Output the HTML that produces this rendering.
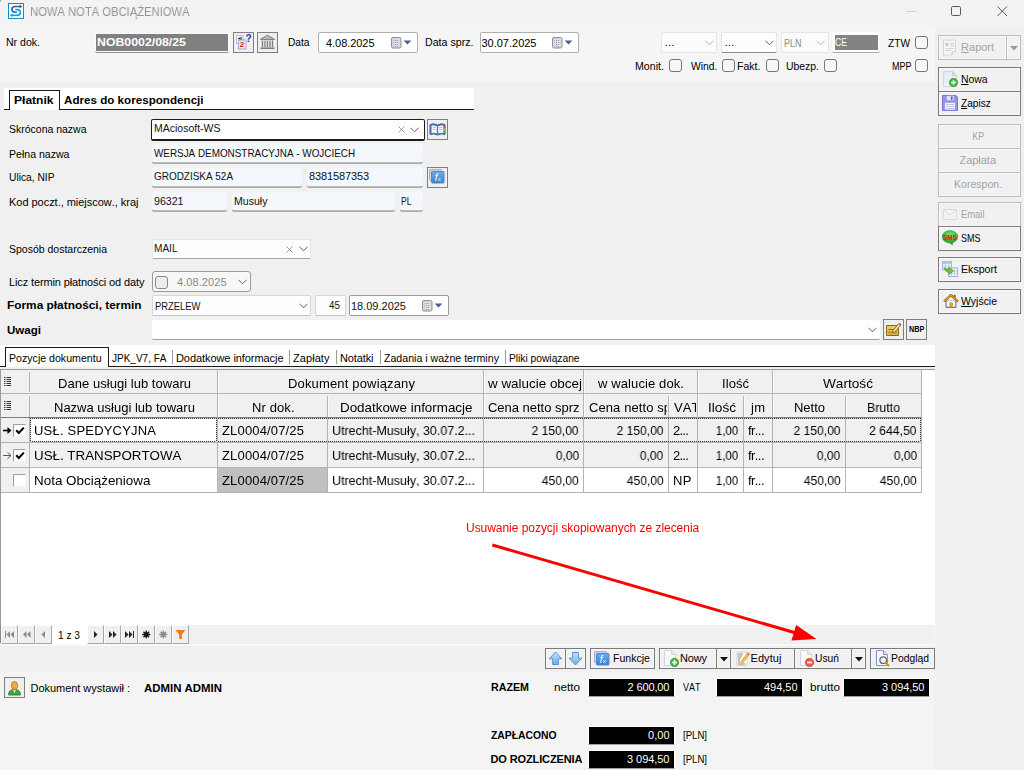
<!DOCTYPE html>
<html lang="pl">
<head>
<meta charset="utf-8">
<title>NOWA NOTA OBCIĄŻENIOWA</title>
<style>
html,body{margin:0;padding:0}
body{width:1024px;height:770px;position:relative;overflow:hidden;background:#f0f0f0;
 font-family:"Liberation Sans",sans-serif;font-size:11px;line-height:13px;color:#000;font-kerning:none}
.a{position:absolute;box-sizing:border-box}
.t{position:absolute;white-space:pre;line-height:13px}
u{text-decoration:underline;text-underline-offset:1px}
svg{position:absolute;overflow:visible}
/* buttons */
.btn{border:1px solid #7a7a7a;background:#f1f1f1;box-shadow:inset 0 0 0 1px #f8f8f8}
.btn.dis{border-color:#bdbdbd}
.ib{border:1px solid #7f7f7f;background:#efefef}
/* flat input with underline */
.fld{background:#f4f7fc;border-top:1px solid #f3f4f6;border-bottom:1px solid #bdbdbd;border-radius:2px;box-shadow:0 1px 0 #ababab}
.cmb{background:#fdfdfd;border:1px solid #e6e6e6;border-bottom:1px solid #8d8d8d;border-radius:1.5px}
.cmb.dis{border-bottom-color:#e4e4e4;background:#fbfbfb}
.date{background:#fff;border:1px solid #b0b0b0;border-radius:2px}
.chk{border:1px solid #767676;border-radius:3px;background:#f7f7f7}
.blk{background:#000;border:1px solid #fcfcfc;border-bottom-color:#a0a0a0}
/* navigator buttons */
.nb{border-right:1px solid #a8a8a8;border-bottom:1px solid #a8a8a8;border-top:1px solid #fff;border-left:1px solid #fff;background:#f0f0f0}

</style>
</head>
<body>
<div class="a" style="left:0px;top:0px;width:1024px;height:27px;background:#f3f3f3"></div>
<div class="a" style="left:0px;top:27px;width:935px;height:55px;background:#f5f5f5"></div>
<div class="a" style="left:0px;top:672px;width:935px;height:98px;background:#f4f4f4"></div>
<div class="a" style="left:0px;top:0px;width:1px;height:2px;background:#b4b4b4"></div>
<div class="a" style="left:1px;top:0px;width:1px;height:1px;background:#d4d4d4"></div>
<div class="a" style="left:1023px;top:0px;width:1px;height:1px;background:#e2e2e2"></div>
<svg style="left:8px;top:3px" width="16" height="16" viewBox="0 0 16 16">
<rect x="0.500" y="0.500" width="15" height="15" fill="#fff" stroke="#0b8fd0" stroke-width="1"/>
<path d="M12.300 3.500 H7.300 Q3.900 3.500 3.900 6.300 Q3.900 9.200 7.300 9.200 H8.800" stroke="#3d57a6" stroke-width="1.600" fill="none"/>
<path d="M11.600 1.500 L14.300 3.500 L11.600 5.500 Z" fill="#3d57a6"/>
<path d="M7.300 6.600 H9 Q12.400 6.600 12.400 9.400 Q12.400 12.300 9 12.300 H3.800" stroke="#0ea4de" stroke-width="1.600" fill="none"/>
<path d="M4.600 10.300 L1.900 12.300 L4.600 14.300 Z" fill="#0ea4de"/>
</svg>
<span class="t" style="left:29.5px;top:5px;font-size:12px;line-height:14px;color:#959595;transform:scaleX(0.935);transform-origin:left center;will-change:transform;">NOWA NOTA OBCIĄŻENIOWA</span>
<svg style="left:896px;top:0" width="128" height="27" viewBox="0 0 128 27">
<path d="M10 11.5 H20" stroke="#cfcfcf" stroke-width="1" fill="none"/>
<rect x="55.5" y="6.5" width="9" height="9" rx="1.2" fill="none" stroke="#5a5a5a" stroke-width="1"/>
<path d="M101.5 6.5 L111 16 M111 6.5 L101.5 16" stroke="#5a5a5a" stroke-width="1" fill="none"/>
</svg>
<span class="t" style="left:6px;top:36px;transform:scaleX(0.959);transform-origin:left center;">Nr dok.</span>
<div class="a" style="left:95px;top:33px;width:134px;height:20px;background:#fbfbfb;border-bottom:1px solid #8f8f8f;border-radius:2px"></div>
<div class="a" style="left:96px;top:34px;width:132px;height:17px;background:#808080"></div>
<span class="t" style="left:96.5px;top:36px;font-weight:bold;color:#fff;transform:scaleX(1.119);transform-origin:left center;">NOB0002/08/25</span>
<div class="a ib" style="left:233px;top:32px;width:21px;height:21px;"></div>
<svg style="left:235px;top:34px" width="17" height="17" viewBox="0 0 17 17">
<rect x="1.500" y="1.500" width="6.500" height="8" fill="#f4f6fb" stroke="#a8b6d0" stroke-width=".8"/>
<path d="M3 4.500 L4.800 3.300 V5.700 Z" fill="#000"/><path d="M6 3 V6" stroke="#000" stroke-width="1"/>
<rect x="3.500" y="6" width="7.500" height="9" fill="#dfe8f6" stroke="#8ea4cc" stroke-width=".8"/>
</svg>
<span class="t" style="left:239.7px;top:40px;font-size:8px;line-height:10px;font-weight:bold;color:#e01818;">2</span>
<span class="t" style="left:245.5px;top:33px;font-size:10px;line-height:12px;font-weight:bold;color:#2a2ad0;">?</span>
<div class="a ib" style="left:257px;top:32px;width:21px;height:21px;"></div>
<svg style="left:259px;top:34px" width="17" height="17" viewBox="0 0 17 17">
<path d="M8.5 1.2 L15.6 5.4 H1.4 Z" fill="#bdbdbd" stroke="#7d7d7d" stroke-width="1" stroke-linejoin="round"/>
<path d="M3.5 6.5 V13 M6 6.5 V13 M8.5 6.5 V13 M11 6.5 V13 M13.5 6.5 V13" stroke="#7d7d7d" stroke-width="1.3"/>
<path d="M1.5 14.2 H15.5" stroke="#7d7d7d" stroke-width="1.6"/>
</svg>
<span class="t" style="left:287.5px;top:36px;transform:scaleX(0.925);transform-origin:left center;">Data</span>
<div class="a date" style="left:318px;top:32px;width:100px;height:21px;"></div>
<span class="t" style="left:326px;top:37px;letter-spacing:-0.05px;">4.08.2025</span>
<svg style="left:391px;top:37px" width="22" height="12" viewBox="0 0 22 12">
<rect x="0.5" y="0.5" width="9.5" height="10.5" rx="1.5" fill="#d9d9d9" stroke="#8e8e8e"/>
<path d="M2.5 3.5 H8 M2.5 5.5 H8 M2.5 7.5 H8 M2.5 9.5 H8" stroke="#9aa3b5" stroke-width="1"/>
<path d="M3.5 2.5 V10 M5.5 2.5 V10 M7.5 2.5 V10" stroke="#f2f2f2" stroke-width=".6"/>
<path d="M12.6 3.6 H20.4 L16.5 7.6 Z" fill="#44619a"/>
</svg>
<span class="t" style="left:425px;top:36px;transform:scaleX(0.967);transform-origin:left center;">Data sprz.</span>
<div class="a date" style="left:480px;top:32px;width:99px;height:21px;"></div>
<span class="t" style="left:481.5px;top:37px;letter-spacing:-0.01px;">30.07.2025</span>
<svg style="left:552px;top:37px" width="22" height="12" viewBox="0 0 22 12">
<rect x="0.5" y="0.5" width="9.5" height="10.5" rx="1.5" fill="#d9d9d9" stroke="#8e8e8e"/>
<path d="M2.5 3.5 H8 M2.5 5.5 H8 M2.5 7.5 H8 M2.5 9.5 H8" stroke="#9aa3b5" stroke-width="1"/>
<path d="M3.5 2.5 V10 M5.5 2.5 V10 M7.5 2.5 V10" stroke="#f2f2f2" stroke-width=".6"/>
<path d="M12.6 3.6 H20.4 L16.5 7.6 Z" fill="#44619a"/>
</svg>
<div class="a cmb dis" style="left:661px;top:32px;width:56px;height:21px;"></div>
<span class="t" style="left:664.8px;top:36px;letter-spacing:0.16px;">...</span>
<svg style="left:705px;top:40px" width="9" height="6" viewBox="0 0 9 6">
<path d="M0.5 0.8 L4.5 4.8 L8.5 0.8" fill="none" stroke="#b4b4b4" stroke-width="1"/></svg>
<div class="a cmb" style="left:721px;top:32px;width:56px;height:21px;"></div>
<span class="t" style="left:724.8px;top:36px;letter-spacing:0.16px;">...</span>
<svg style="left:765px;top:40px" width="9" height="6" viewBox="0 0 9 6">
<path d="M0.5 0.8 L4.5 4.8 L8.5 0.8" fill="none" stroke="#5c5c5c" stroke-width="1"/></svg>
<div class="a cmb dis" style="left:781px;top:32px;width:48px;height:21px;"></div>
<span class="t" style="left:784px;top:37px;color:#8c8c8c;transform:scaleX(0.818);transform-origin:left center;">PLN</span>
<svg style="left:816px;top:40px" width="9" height="6" viewBox="0 0 9 6">
<path d="M0.5 0.8 L4.5 4.8 L8.5 0.8" fill="none" stroke="#b4b4b4" stroke-width="1"/></svg>
<div class="a" style="left:832px;top:32px;width:48px;height:21px;background:#fdfdfd;border-bottom:1px solid #a9a9a9;border-radius:2px"></div>
<div class="a" style="left:835px;top:35px;width:43px;height:15px;background:#838383"></div>
<span class="t" style="left:835px;top:36px;color:#fff;transform:scaleX(0.785);transform-origin:left center;">CE</span>
<span class="t" style="left:887.5px;top:37px;transform:scaleX(0.923);transform-origin:left center;">ZTW</span>
<div class="a chk" style="left:915px;top:36px;width:13px;height:13px;"></div>
<span class="t" style="left:635px;top:60px;transform:scaleX(0.968);transform-origin:left center;">Monit.</span>
<div class="a chk" style="left:669px;top:59px;width:13px;height:13px;"></div>
<span class="t" style="left:690.5px;top:60px;transform:scaleX(0.942);transform-origin:left center;">Wind.</span>
<div class="a chk" style="left:722px;top:59px;width:13px;height:13px;"></div>
<span class="t" style="left:737px;top:60px;transform:scaleX(0.961);transform-origin:left center;">Fakt.</span>
<div class="a chk" style="left:766px;top:59px;width:13px;height:13px;"></div>
<span class="t" style="left:785.5px;top:60px;transform:scaleX(0.947);transform-origin:left center;">Ubezp.</span>
<div class="a chk" style="left:824px;top:59px;width:13px;height:13px;"></div>
<span class="t" style="left:891.5px;top:60px;transform:scaleX(0.818);transform-origin:left center;">MPP</span>
<div class="a chk" style="left:915px;top:59px;width:13px;height:13px;"></div>
<div class="a" style="left:4px;top:88px;width:470px;height:21px;background:#fff"></div>
<div class="a" style="left:4px;top:109px;width:470px;height:1px;background:#1a1a1a"></div>
<div class="a" style="left:9px;top:90px;width:51px;height:20px;background:#fff;border:1px solid #1a1a1a;border-bottom:none"></div>
<span class="t" style="left:14px;top:94px;font-weight:bold;transform:scaleX(1.095);transform-origin:left center;">Płatnik</span>
<span class="t" style="left:64px;top:94px;font-weight:bold;transform:scaleX(1.057);transform-origin:left center;">Adres do korespondencji</span>
<span class="t" style="left:9px;top:123px;transform:scaleX(0.953);transform-origin:left center;">Skrócona nazwa</span>
<div class="a" style="left:151px;top:119px;width:274px;height:21.5px;background:#fff;border:1px solid #1c1c1c;border-bottom-width:2px;border-radius:2px"></div>
<span class="t" style="left:153.5px;top:122px;color:#111;transform:scaleX(0.954);transform-origin:left center;">MAciosoft-WS</span>
<svg style="left:398px;top:126px" width="7" height="7" viewBox="0 0 7 7">
<path d="M0.5 0.5 L6.5 6.5 M6.5 0.5 L0.5 6.5" fill="none" stroke="#8a8a8a" stroke-width="0.9"/></svg>
<svg style="left:410px;top:127px" width="9" height="6" viewBox="0 0 9 6">
<path d="M0.5 0.8 L4.5 4.8 L8.5 0.8" fill="none" stroke="#5c5c5c" stroke-width="1"/></svg>
<div class="a ib" style="left:427px;top:119px;width:21px;height:21px;"></div>
<svg style="left:429px;top:122px" width="17" height="15" viewBox="0 0 17 15">
<path d="M1 2.5 Q4.5 1 8.5 3 Q12.500 1 16 2.500 V12.500 Q12.500 11 8.500 13 Q4.500 11 1 12.500 Z" fill="#5b80c4" stroke="#3d5a96" stroke-width="1"/>
<path d="M2.6 3.600 Q5 3 7.800 4.300 V11.300 Q5 10.200 2.600 10.900 Z" fill="#f4f7fd"/>
<path d="M14.400 3.600 Q12 3 9.200 4.300 V11.300 Q12 10.200 14.400 10.900 Z" fill="#f4f7fd"/>
<path d="M3.800 5.500 H6.600 M3.800 7.500 H6.600 M10.400 5.500 H13.200 M10.400 7.500 H13.200" stroke="#a9bde6" stroke-width="1"/>
<rect x="14.600" y="4" width="1.600" height="2" fill="#e04a3a"/><rect x="14.600" y="6.500" width="1.600" height="2" fill="#e8c23a"/><rect x="14.600" y="9" width="1.600" height="2" fill="#4ab04a"/>
</svg>
<span class="t" style="left:9px;top:148px;transform:scaleX(0.96);transform-origin:left center;">Pełna nazwa</span>
<div class="a fld" style="left:152px;top:143px;width:271px;height:20px;"></div>
<span class="t" style="left:154px;top:147px;color:#111;transform:scaleX(0.899);transform-origin:left center;">WERSJA DEMONSTRACYJNA - WOJCIECH</span>
<span class="t" style="left:9px;top:171px;transform:scaleX(0.93);transform-origin:left center;">Ulica, NIP</span>
<div class="a fld" style="left:152px;top:167px;width:150px;height:20px;"></div>
<span class="t" style="left:154px;top:170px;color:#111;transform:scaleX(0.904);transform-origin:left center;">GRODZISKA 52A</span>
<div class="a fld" style="left:307px;top:167px;width:116px;height:20px;"></div>
<span class="t" style="left:309px;top:170px;color:#111;letter-spacing:-0.13px;">8381587353</span>
<div class="a ib" style="left:427px;top:167px;width:21px;height:21px;"></div>
<svg style="left:429px;top:169px" width="16" height="15" viewBox="0 0 16 15">
<defs><linearGradient id="gf429" x1="0" y1="0" x2="0" y2="1"><stop offset="0" stop-color="#6eaae8"/><stop offset="1" stop-color="#3f80d2"/></linearGradient></defs>
<rect x="0.500" y="0.500" width="12" height="11" rx=".8" fill="#c9d2ee" stroke="#a2aedc"/>
<rect x="2.500" y="2.500" width="12.500" height="11.500" rx=".8" fill="url(#gf429)" stroke="#4d88d4"/>
</svg>
<span class="t" style="left:434.8px;top:172px;font-size:10px;line-height:12px;color:#fff;font-style:italic;font-family:"Liberation Serif",serif;will-change:transform;">f</span>
<span class="t" style="left:438.3px;top:175px;font-size:6px;line-height:8px;color:#fff;will-change:transform;">x</span>
<span class="t" style="left:9px;top:196px;letter-spacing:-0.03px;">Kod poczt., miejscow., kraj</span>
<div class="a fld" style="left:152px;top:191px;width:75px;height:20px;"></div>
<span class="t" style="left:154px;top:195px;color:#111;transform:scaleX(0.964);transform-origin:left center;">96321</span>
<div class="a fld" style="left:232px;top:191px;width:163px;height:20px;"></div>
<span class="t" style="left:233.5px;top:195px;color:#111;transform:scaleX(0.961);transform-origin:left center;">Musuły</span>
<div class="a fld" style="left:400px;top:191px;width:23px;height:20px;"></div>
<span class="t" style="left:401px;top:195px;color:#111;transform:scaleX(0.78);transform-origin:left center;">PL</span>
<span class="t" style="left:8.5px;top:243px;transform:scaleX(0.954);transform-origin:left center;">Sposób dostarczenia</span>
<div class="a cmb" style="left:152px;top:239px;width:159px;height:20px;border-bottom-color:#a6a6a6"></div>
<span class="t" style="left:153.5px;top:242px;color:#111;transform:scaleX(0.915);transform-origin:left center;">MAIL</span>
<svg style="left:286px;top:246px" width="7" height="7" viewBox="0 0 7 7">
<path d="M0.5 0.5 L6.5 6.5 M6.5 0.5 L0.5 6.5" fill="none" stroke="#8a8a8a" stroke-width="0.9"/></svg>
<svg style="left:299px;top:246px" width="9" height="6" viewBox="0 0 9 6">
<path d="M0.5 0.8 L4.5 4.8 L8.5 0.8" fill="none" stroke="#5c5c5c" stroke-width="1"/></svg>
<span class="t" style="left:9px;top:276px;letter-spacing:-0.12px;">Licz termin płatności od daty</span>
<div class="a" style="left:152px;top:271px;width:99px;height:21px;background:#f7f7f7;border:1px solid #999;border-radius:3px"></div>
<div class="a" style="left:155px;top:276px;width:13px;height:13px;border:1px solid #8a8a8a;border-radius:3px;background:#ededed"></div>
<span class="t" style="left:177px;top:276px;color:#8a8a8a;letter-spacing:0.07px;">4.08.2025</span>
<svg style="left:238px;top:279px" width="9" height="6" viewBox="0 0 9 6">
<path d="M0.5 0.8 L4.5 4.8 L8.5 0.8" fill="none" stroke="#6a6a6a" stroke-width="1"/></svg>
<span class="t" style="left:6.5px;top:299px;font-weight:bold;transform:scaleX(1.079);transform-origin:left center;">Forma płatności, termin</span>
<div class="a cmb" style="left:152px;top:295px;width:159px;height:21px;border-color:#d6d6d6;border-bottom-color:#c4c4c4"></div>
<span class="t" style="left:154.5px;top:300px;color:#111;transform:scaleX(0.855);transform-origin:left center;">PRZELEW</span>
<svg style="left:299px;top:303px" width="9" height="6" viewBox="0 0 9 6">
<path d="M0.5 0.8 L4.5 4.8 L8.5 0.8" fill="none" stroke="#5c5c5c" stroke-width="1"/></svg>
<div class="a cmb" style="left:315px;top:295px;width:31px;height:21px;border-color:#d6d6d6;border-bottom-color:#c4c4c4"></div>
<span class="t" style="left:329px;top:299px;color:#111;transform:scaleX(0.898);transform-origin:left center;">45</span>
<div class="a date" style="left:349px;top:295px;width:100px;height:21px;border-color:#9a9a9a"></div>
<span class="t" style="left:351px;top:300px;color:#111;letter-spacing:-0.01px;">18.09.2025</span>
<svg style="left:421.5px;top:300px" width="22" height="12" viewBox="0 0 22 12">
<rect x="0.5" y="0.5" width="9.5" height="10.5" rx="1.5" fill="#d9d9d9" stroke="#8e8e8e"/>
<path d="M2.5 3.5 H8 M2.5 5.5 H8 M2.5 7.5 H8 M2.5 9.5 H8" stroke="#9aa3b5" stroke-width="1"/>
<path d="M3.5 2.5 V10 M5.5 2.5 V10 M7.5 2.5 V10" stroke="#f2f2f2" stroke-width=".6"/>
<path d="M12.6 3.6 H20.4 L16.5 7.6 Z" fill="#44619a"/>
</svg>
<span class="t" style="left:6.5px;top:324px;font-weight:bold;transform:scaleX(1.049);transform-origin:left center;">Uwagi</span>
<div class="a" style="left:152px;top:320px;width:728px;height:20px;background:#fff;border-bottom:1px solid #a0a0a0;border-radius:2px"></div>
<svg style="left:868px;top:327px" width="9" height="6" viewBox="0 0 9 6">
<path d="M0.5 0.8 L4.5 4.8 L8.5 0.8" fill="none" stroke="#5c5c5c" stroke-width="1"/></svg>
<div class="a ib" style="left:883px;top:319px;width:21px;height:21px;"></div>
<svg style="left:885px;top:321px" width="17" height="17" viewBox="0 0 17 17">
<path d="M1.5 4.500 H13.500 V14.500 H1.500 Z" fill="#e8c85a" stroke="#8a6a1a" stroke-width="1"/>
<path d="M2.500 10 H12.500 V13.500 H2.500 Z" fill="#c9a030"/>
<path d="M3.500 8.500 H9" stroke="#8a6a1a" stroke-width="1"/>
<path d="M8 9.500 L13.500 3 L15.500 4.500 L10 11 L7.600 11.600 Z" fill="#f4e2a0" stroke="#7a5a1a" stroke-width=".8"/>
<path d="M13.500 3 L14.600 1.700 L16.400 3.300 L15.500 4.500 Z" fill="#e0503a"/>
</svg>
<div class="a ib" style="left:906px;top:319px;width:21px;height:21px;"></div>
<span class="t" style="left:908.5px;top:324px;font-size:9px;line-height:11px;font-weight:bold;transform:scaleX(0.805);transform-origin:left center;">NBP</span>
<div class="a" style="left:0px;top:345px;width:935px;height:22px;background:#fff"></div>
<div class="a" style="left:0px;top:366px;width:935px;height:1px;background:#1a1a1a"></div>
<div class="a" style="left:5px;top:347px;width:104px;height:20px;background:#fff;border:1px solid #1a1a1a;border-bottom:none"></div>
<span class="t" style="left:9px;top:352px;transform:scaleX(0.964);transform-origin:left center;">Pozycje dokumentu</span>
<span class="t" style="left:112px;top:352px;transform:scaleX(0.91);transform-origin:left center;">JPK_V7, FA</span>
<span class="t" style="left:176px;top:352px;letter-spacing:-0.07px;">Dodatkowe informacje</span>
<span class="t" style="left:293px;top:352px;letter-spacing:0.07px;">Zapłaty</span>
<span class="t" style="left:340px;top:352px;letter-spacing:-0.12px;">Notatki</span>
<span class="t" style="left:384px;top:352px;transform:scaleX(0.964);transform-origin:left center;">Zadania i ważne terminy</span>
<span class="t" style="left:509px;top:352px;transform:scaleX(0.93);transform-origin:left center;">Pliki powiązane</span>
<div class="a" style="left:172px;top:350px;width:1px;height:14px;background:#9a9a9a"></div>
<div class="a" style="left:289px;top:350px;width:1px;height:14px;background:#9a9a9a"></div>
<div class="a" style="left:336px;top:350px;width:1px;height:14px;background:#9a9a9a"></div>
<div class="a" style="left:380px;top:350px;width:1px;height:14px;background:#9a9a9a"></div>
<div class="a" style="left:505px;top:350px;width:1px;height:14px;background:#9a9a9a"></div>
<div class="a" style="left:0px;top:369px;width:935px;height:257px;background:#fff;border-top:1px solid #9a9a9a;border-left:1px solid #9a9a9a"></div>
<div class="a" style="left:1px;top:370px;width:921px;height:48px;background:#f0f0f0"></div>
<div class="a" style="left:1px;top:393px;width:921px;height:1px;background:#b4b4b4"></div>
<div class="a" style="left:1px;top:417px;width:921px;height:1px;background:#7a7a7a"></div>
<div class="a" style="left:29px;top:372px;width:1px;height:20px;background:#b4b4b4"></div>
<div class="a" style="left:217px;top:370px;width:1px;height:24px;background:#b4b4b4"></div>
<div class="a" style="left:483px;top:370px;width:1px;height:24px;background:#b4b4b4"></div>
<div class="a" style="left:583px;top:370px;width:1px;height:24px;background:#b4b4b4"></div>
<div class="a" style="left:697px;top:370px;width:1px;height:24px;background:#b4b4b4"></div>
<div class="a" style="left:772px;top:370px;width:1px;height:24px;background:#b4b4b4"></div>
<div class="a" style="left:921px;top:370px;width:1px;height:24px;background:#b4b4b4"></div>
<div class="a" style="left:29px;top:396px;width:1px;height:21px;background:#b4b4b4"></div>
<div class="a" style="left:217px;top:394px;width:1px;height:24px;background:#b4b4b4"></div>
<div class="a" style="left:327px;top:396px;width:1px;height:21px;background:#b4b4b4"></div>
<div class="a" style="left:483px;top:394px;width:1px;height:24px;background:#b4b4b4"></div>
<div class="a" style="left:583px;top:394px;width:1px;height:24px;background:#b4b4b4"></div>
<div class="a" style="left:668px;top:396px;width:1px;height:21px;background:#b4b4b4"></div>
<div class="a" style="left:697px;top:394px;width:1px;height:24px;background:#b4b4b4"></div>
<div class="a" style="left:743px;top:396px;width:1px;height:21px;background:#b4b4b4"></div>
<div class="a" style="left:772px;top:394px;width:1px;height:24px;background:#b4b4b4"></div>
<div class="a" style="left:845px;top:396px;width:1px;height:21px;background:#b4b4b4"></div>
<div class="a" style="left:921px;top:394px;width:1px;height:24px;background:#b4b4b4"></div>
<div class="a" style="left:218px;top:370px;width:1px;height:23px;background:#fbfbfb"></div>
<div class="a" style="left:218px;top:394px;width:1px;height:23px;background:#fbfbfb"></div>
<div class="a" style="left:484px;top:370px;width:1px;height:23px;background:#fbfbfb"></div>
<div class="a" style="left:484px;top:394px;width:1px;height:23px;background:#fbfbfb"></div>
<div class="a" style="left:584px;top:370px;width:1px;height:23px;background:#fbfbfb"></div>
<div class="a" style="left:584px;top:394px;width:1px;height:23px;background:#fbfbfb"></div>
<div class="a" style="left:698px;top:370px;width:1px;height:23px;background:#fbfbfb"></div>
<div class="a" style="left:698px;top:394px;width:1px;height:23px;background:#fbfbfb"></div>
<div class="a" style="left:773px;top:370px;width:1px;height:23px;background:#fbfbfb"></div>
<div class="a" style="left:773px;top:394px;width:1px;height:23px;background:#fbfbfb"></div>
<div class="a" style="left:328px;top:396px;width:1px;height:21px;background:#fbfbfb"></div>
<div class="a" style="left:669px;top:396px;width:1px;height:21px;background:#fbfbfb"></div>
<div class="a" style="left:744px;top:396px;width:1px;height:21px;background:#fbfbfb"></div>
<div class="a" style="left:846px;top:396px;width:1px;height:21px;background:#fbfbfb"></div>
<span class="t" style="left:57.5px;top:376px;font-size:13px;line-height:15px;color:#000;letter-spacing:0.04px;will-change:transform;">Dane usługi lub towaru</span>
<span class="t" style="left:288px;top:376px;font-size:13px;line-height:15px;color:#000;letter-spacing:0.16px;will-change:transform;">Dokument powiązany</span>
<span class="t" style="left:487.5px;top:376px;font-size:13px;line-height:15px;color:#000;transform:scaleX(1.032);transform-origin:left center;width:92.1px;overflow:hidden;will-change:transform;">w walucie obcej</span>
<span class="t" style="left:598px;top:376px;font-size:13px;line-height:15px;color:#000;letter-spacing:0.11px;will-change:transform;">w walucie dok.</span>
<span class="t" style="left:722px;top:376px;font-size:13px;line-height:15px;color:#000;letter-spacing:0.07px;will-change:transform;">Ilość</span>
<span class="t" style="left:823px;top:376px;font-size:13px;line-height:15px;color:#000;transform:scaleX(1.049);transform-origin:left center;will-change:transform;">Wartość</span>
<span class="t" style="left:53.5px;top:400px;font-size:13px;line-height:15px;color:#000;will-change:transform;">Nazwa usługi lub towaru</span>
<span class="t" style="left:252px;top:400px;font-size:13px;line-height:15px;color:#000;letter-spacing:0.1px;will-change:transform;">Nr dok.</span>
<span class="t" style="left:340px;top:400px;font-size:13px;line-height:15px;color:#000;transform:scaleX(1.03);transform-origin:left center;will-change:transform;">Dodatkowe informacje</span>
<span class="t" style="left:488px;top:400px;font-size:13px;line-height:15px;color:#000;letter-spacing:-0.02px;width:94px;overflow:hidden;will-change:transform;">Cena netto sprz</span>
<span class="t" style="left:589px;top:400px;font-size:13px;line-height:15px;color:#000;letter-spacing:0.09px;width:77.5px;overflow:hidden;will-change:transform;">Cena netto spr</span>
<span class="t" style="left:673.5px;top:400px;font-size:13px;line-height:15px;color:#000;letter-spacing:0.1px;width:22px;overflow:hidden;will-change:transform;">VAT</span>
<span class="t" style="left:708px;top:400px;font-size:13px;line-height:15px;color:#000;transform:scaleX(1.047);transform-origin:left center;will-change:transform;">Ilość</span>
<span class="t" style="left:751px;top:400px;font-size:13px;line-height:15px;color:#000;letter-spacing:0.28px;will-change:transform;">jm</span>
<span class="t" style="left:793.5px;top:400px;font-size:13px;line-height:15px;color:#000;letter-spacing:-0.02px;will-change:transform;">Netto</span>
<span class="t" style="left:867px;top:400px;font-size:13px;line-height:15px;color:#000;transform:scaleX(0.951);transform-origin:left center;will-change:transform;">Brutto</span>
<svg style="left:4px;top:376px" width="7" height="10" viewBox="0 0 7 10">
<path d="M0 1.500 H1.500 M2.500 1.500 H7 M0 3.500 H1.500 M2.500 3.500 H7 M0 5.500 H1.500 M2.500 5.500 H7 M0 7.500 H1.500 M2.500 7.500 H7 M0 9.500 H1.500 M2.500 9.500 H7" stroke="#333" stroke-width="1"/></svg>
<svg style="left:4px;top:400px" width="7" height="10" viewBox="0 0 7 10">
<path d="M0 1.500 H1.500 M2.500 1.500 H7 M0 3.500 H1.500 M2.500 3.500 H7 M0 5.500 H1.500 M2.500 5.500 H7 M0 7.500 H1.500 M2.500 7.500 H7 M0 9.500 H1.500 M2.500 9.500 H7" stroke="#333" stroke-width="1"/></svg>
<div class="a" style="left:1px;top:418px;width:921px;height:24px;background:#f0f0f0"></div>
<div class="a" style="left:30px;top:419px;width:187px;height:23px;background:#fff"></div>
<div class="a" style="left:1px;top:442px;width:921px;height:1px;background:#b4b4b4"></div>
<div class="a" style="left:29px;top:418px;width:1px;height:25px;background:#b4b4b4"></div>
<div class="a" style="left:217px;top:418px;width:1px;height:25px;background:#b4b4b4"></div>
<div class="a" style="left:327px;top:418px;width:1px;height:25px;background:#b4b4b4"></div>
<div class="a" style="left:483px;top:418px;width:1px;height:25px;background:#b4b4b4"></div>
<div class="a" style="left:583px;top:418px;width:1px;height:25px;background:#b4b4b4"></div>
<div class="a" style="left:668px;top:418px;width:1px;height:25px;background:#b4b4b4"></div>
<div class="a" style="left:697px;top:418px;width:1px;height:25px;background:#b4b4b4"></div>
<div class="a" style="left:743px;top:418px;width:1px;height:25px;background:#b4b4b4"></div>
<div class="a" style="left:772px;top:418px;width:1px;height:25px;background:#b4b4b4"></div>
<div class="a" style="left:845px;top:418px;width:1px;height:25px;background:#b4b4b4"></div>
<div class="a" style="left:921px;top:418px;width:1px;height:25px;background:#b4b4b4"></div>
<span class="t" style="left:33.5px;top:423px;font-size:13px;line-height:15px;color:#000;letter-spacing:0.2px;will-change:transform;">USŁ. SPEDYCYJNA</span>
<span class="t" style="left:222px;top:423px;font-size:13px;line-height:15px;color:#000;letter-spacing:0.16px;will-change:transform;">ZL0004/07/25</span>
<span class="t" style="left:332px;top:423px;font-size:13px;line-height:15px;color:#000;transform:scaleX(0.961);transform-origin:left center;will-change:transform;">Utrecht-Musuły, 30.07.2...</span>
<span class="t" style="left:528.4px;top:423px;font-size:13px;line-height:15px;color:#000;transform:scaleX(0.929);transform-origin:right center;will-change:transform;">2 150,00</span>
<span class="t" style="left:612.9px;top:423px;font-size:13px;line-height:15px;color:#000;transform:scaleX(0.929);transform-origin:right center;will-change:transform;">2 150,00</span>
<span class="t" style="left:673px;top:423px;font-size:13px;line-height:15px;color:#000;letter-spacing:-0.76px;will-change:transform;">2...</span>
<span class="t" style="left:712.7px;top:423px;font-size:13px;line-height:15px;color:#000;transform:scaleX(0.889);transform-origin:right center;will-change:transform;">1,00</span>
<span class="t" style="left:747.7px;top:423px;font-size:13px;line-height:15px;color:#000;letter-spacing:-0.57px;will-change:transform;">fr...</span>
<span class="t" style="left:789.9px;top:423px;font-size:13px;line-height:15px;color:#000;transform:scaleX(0.929);transform-origin:right center;will-change:transform;">2 150,00</span>
<span class="t" style="left:866.4px;top:423px;font-size:13px;line-height:15px;color:#000;transform:scaleX(0.939);transform-origin:right center;will-change:transform;">2 644,50</span>
<div class="a" style="left:1px;top:443px;width:921px;height:24px;background:#f0f0f0"></div>
<div class="a" style="left:1px;top:467px;width:921px;height:1px;background:#b4b4b4"></div>
<div class="a" style="left:29px;top:443px;width:1px;height:25px;background:#b4b4b4"></div>
<div class="a" style="left:217px;top:443px;width:1px;height:25px;background:#b4b4b4"></div>
<div class="a" style="left:327px;top:443px;width:1px;height:25px;background:#b4b4b4"></div>
<div class="a" style="left:483px;top:443px;width:1px;height:25px;background:#b4b4b4"></div>
<div class="a" style="left:583px;top:443px;width:1px;height:25px;background:#b4b4b4"></div>
<div class="a" style="left:668px;top:443px;width:1px;height:25px;background:#b4b4b4"></div>
<div class="a" style="left:697px;top:443px;width:1px;height:25px;background:#b4b4b4"></div>
<div class="a" style="left:743px;top:443px;width:1px;height:25px;background:#b4b4b4"></div>
<div class="a" style="left:772px;top:443px;width:1px;height:25px;background:#b4b4b4"></div>
<div class="a" style="left:845px;top:443px;width:1px;height:25px;background:#b4b4b4"></div>
<div class="a" style="left:921px;top:443px;width:1px;height:25px;background:#b4b4b4"></div>
<span class="t" style="left:33.5px;top:448px;font-size:13px;line-height:15px;color:#000;transform:scaleX(1.026);transform-origin:left center;will-change:transform;">USŁ. TRANSPORTOWA</span>
<span class="t" style="left:222px;top:448px;font-size:13px;line-height:15px;color:#000;letter-spacing:0.16px;will-change:transform;">ZL0004/07/25</span>
<span class="t" style="left:332px;top:448px;font-size:13px;line-height:15px;color:#000;transform:scaleX(0.961);transform-origin:left center;will-change:transform;">Utrecht-Musuły, 30.07.2...</span>
<span class="t" style="left:553.7px;top:448px;font-size:13px;line-height:15px;color:#000;transform:scaleX(0.928);transform-origin:right center;will-change:transform;">0,00</span>
<span class="t" style="left:638.2px;top:448px;font-size:13px;line-height:15px;color:#000;transform:scaleX(0.928);transform-origin:right center;will-change:transform;">0,00</span>
<span class="t" style="left:673px;top:448px;font-size:13px;line-height:15px;color:#000;letter-spacing:-0.76px;will-change:transform;">2...</span>
<span class="t" style="left:712.7px;top:448px;font-size:13px;line-height:15px;color:#000;transform:scaleX(0.889);transform-origin:right center;will-change:transform;">1,00</span>
<span class="t" style="left:747.7px;top:448px;font-size:13px;line-height:15px;color:#000;letter-spacing:-0.57px;will-change:transform;">fr...</span>
<span class="t" style="left:815.2px;top:448px;font-size:13px;line-height:15px;color:#000;transform:scaleX(0.928);transform-origin:right center;will-change:transform;">0,00</span>
<span class="t" style="left:891.7px;top:448px;font-size:13px;line-height:15px;color:#000;transform:scaleX(0.928);transform-origin:right center;will-change:transform;">0,00</span>
<div class="a" style="left:1px;top:468px;width:29px;height:24px;background:#f0f0f0"></div>
<div class="a" style="left:218px;top:468px;width:109px;height:24px;background:#c0c0c0"></div>
<div class="a" style="left:1px;top:492px;width:921px;height:1px;background:#b4b4b4"></div>
<div class="a" style="left:29px;top:468px;width:1px;height:25px;background:#b4b4b4"></div>
<div class="a" style="left:217px;top:468px;width:1px;height:25px;background:#b4b4b4"></div>
<div class="a" style="left:327px;top:468px;width:1px;height:25px;background:#b4b4b4"></div>
<div class="a" style="left:483px;top:468px;width:1px;height:25px;background:#b4b4b4"></div>
<div class="a" style="left:583px;top:468px;width:1px;height:25px;background:#b4b4b4"></div>
<div class="a" style="left:668px;top:468px;width:1px;height:25px;background:#b4b4b4"></div>
<div class="a" style="left:697px;top:468px;width:1px;height:25px;background:#b4b4b4"></div>
<div class="a" style="left:743px;top:468px;width:1px;height:25px;background:#b4b4b4"></div>
<div class="a" style="left:772px;top:468px;width:1px;height:25px;background:#b4b4b4"></div>
<div class="a" style="left:845px;top:468px;width:1px;height:25px;background:#b4b4b4"></div>
<div class="a" style="left:921px;top:468px;width:1px;height:25px;background:#b4b4b4"></div>
<span class="t" style="left:33.5px;top:473px;font-size:13px;line-height:15px;color:#000;transform:scaleX(1.033);transform-origin:left center;will-change:transform;">Nota Obciążeniowa</span>
<span class="t" style="left:222px;top:473px;font-size:13px;line-height:15px;color:#000;letter-spacing:0.16px;will-change:transform;">ZL0004/07/25</span>
<span class="t" style="left:332px;top:473px;font-size:13px;line-height:15px;color:#000;transform:scaleX(0.961);transform-origin:left center;will-change:transform;">Utrecht-Musuły, 30.07.2...</span>
<span class="t" style="left:539.2px;top:473px;font-size:13px;line-height:15px;color:#000;transform:scaleX(0.93);transform-origin:right center;will-change:transform;">450,00</span>
<span class="t" style="left:623.7px;top:473px;font-size:13px;line-height:15px;color:#000;transform:scaleX(0.93);transform-origin:right center;will-change:transform;">450,00</span>
<span class="t" style="left:673px;top:473px;font-size:13px;line-height:15px;color:#000;letter-spacing:0.44px;will-change:transform;">NP</span>
<span class="t" style="left:712.7px;top:473px;font-size:13px;line-height:15px;color:#000;transform:scaleX(0.889);transform-origin:right center;will-change:transform;">1,00</span>
<span class="t" style="left:747.7px;top:473px;font-size:13px;line-height:15px;color:#000;letter-spacing:-0.57px;will-change:transform;">fr...</span>
<span class="t" style="left:800.7px;top:473px;font-size:13px;line-height:15px;color:#000;transform:scaleX(0.93);transform-origin:right center;will-change:transform;">450,00</span>
<span class="t" style="left:877.2px;top:473px;font-size:13px;line-height:15px;color:#000;transform:scaleX(0.93);transform-origin:right center;will-change:transform;">450,00</span>
<div class="a" style="left:30px;top:418px;width:891px;height:1px;background:repeating-linear-gradient(90deg,#3a3a3a 0 1px,#d6d6d6 1px 2px)"></div>
<div class="a" style="left:30px;top:441px;width:891px;height:1px;background:repeating-linear-gradient(90deg,#3a3a3a 0 1px,#d6d6d6 1px 2px)"></div>
<div class="a" style="left:30px;top:418px;width:1px;height:24px;background:repeating-linear-gradient(180deg,#3a3a3a 0 1px,#d6d6d6 1px 2px)"></div>
<div class="a" style="left:216px;top:418px;width:1px;height:24px;background:repeating-linear-gradient(180deg,#3a3a3a 0 1px,#d6d6d6 1px 2px)"></div>
<div class="a" style="left:920px;top:418px;width:1px;height:24px;background:repeating-linear-gradient(180deg,#3a3a3a 0 1px,#d6d6d6 1px 2px)"></div>
<svg style="left:3px;top:426px" width="9" height="9" viewBox="0 0 9 9">
<path d="M0 4.500 H6" stroke="#000" stroke-width="1.600"/><path d="M4.500 1 L8.500 4.500 L4.500 8 Z" fill="#000"/></svg>
<svg style="left:3px;top:451px" width="9" height="9" viewBox="0 0 9 9">
<path d="M0 4.500 H7.500 M4.500 1.300 L8 4.500 L4.500 7.700" stroke="#5a5a5a" stroke-width="1" fill="none"/></svg>
<div class="a" style="left:13px;top:424px;width:13px;height:13px;background:#fff;border:1px solid #f4f4f4;border-top-color:#a0a0a0;border-left-color:#a0a0a0"></div>
<svg style="left:15px;top:426px" width="10" height="9" viewBox="0 0 10 9">
<path d="M1.200 4.300 L3.800 6.900 L8.800 1.600" stroke="#000" stroke-width="2.100" fill="none"/></svg>
<div class="a" style="left:13px;top:449px;width:13px;height:13px;background:#fff;border:1px solid #f4f4f4;border-top-color:#a0a0a0;border-left-color:#a0a0a0"></div>
<svg style="left:15px;top:451px" width="10" height="9" viewBox="0 0 10 9">
<path d="M1.200 4.300 L3.800 6.900 L8.800 1.600" stroke="#000" stroke-width="2.100" fill="none"/></svg>
<div class="a" style="left:13px;top:474px;width:13px;height:13px;background:#fff;border:1px solid #f4f4f4;border-top-color:#a0a0a0;border-left-color:#a0a0a0"></div>
<div class="a" style="left:0px;top:625px;width:935px;height:21px;background:#f0f0f0;border-bottom:2px solid #f8f8f8;border-right:1px solid #f8f8f8"></div>
<div class="a" style="left:52px;top:625px;width:35px;height:19px;background:#fff"></div>
<span class="t" style="left:58px;top:629px;transform:scaleX(0.922);transform-origin:left center;">1 z 3</span>
<div class="a" style="left:0px;top:625px;width:1px;height:18px;background:#8a8a8a"></div>
<div class="a nb" style="left:1px;top:625px;width:17px;height:19px;"></div>
<div class="a nb" style="left:18px;top:625px;width:17px;height:19px;"></div>
<div class="a nb" style="left:35px;top:625px;width:17px;height:19px;"></div>
<div class="a nb" style="left:87px;top:625px;width:17px;height:19px;"></div>
<div class="a nb" style="left:104px;top:625px;width:17px;height:19px;"></div>
<div class="a nb" style="left:121px;top:625px;width:17px;height:19px;"></div>
<div class="a nb" style="left:138px;top:625px;width:17px;height:19px;"></div>
<div class="a nb" style="left:155px;top:625px;width:17px;height:19px;"></div>
<div class="a nb" style="left:172px;top:625px;width:17px;height:19px;"></div>
<svg style="left:1px;top:629px" width="17" height="11" viewBox="0 0 17 11"><path d="M4 2 H5 V9 H4 Z M9 2 V9 L5.500 5.500 Z M13 2 V9 L9.500 5.500 Z" fill="#8c8c8c"/></svg>
<svg style="left:18px;top:629px" width="17" height="11" viewBox="0 0 17 11"><path d="M8.500 2 V9 L5 5.500 Z M12.500 2 V9 L9 5.500 Z" fill="#8c8c8c"/></svg>
<svg style="left:35px;top:629px" width="17" height="11" viewBox="0 0 17 11"><path d="M10 2 V9 L6.500 5.500 Z" fill="#8c8c8c"/></svg>
<svg style="left:87px;top:629px" width="17" height="11" viewBox="0 0 17 11"><path d="M7 2 V9 L10.500 5.500 Z" fill="#222"/></svg>
<svg style="left:104px;top:629px" width="17" height="11" viewBox="0 0 17 11"><path d="M5 2 V9 L8.500 5.500 Z M9 2 V9 L12.500 5.500 Z" fill="#222"/></svg>
<svg style="left:121px;top:629px" width="17" height="11" viewBox="0 0 17 11"><path d="M4 2 V9 L7.500 5.500 Z M8 2 V9 L11.500 5.500 Z M12 2 H13 V9 H12 Z" fill="#222"/></svg>
<svg style="left:138px;top:629px" width="17" height="11" viewBox="0 0 17 11">
<circle cx="8.300" cy="5.500" r="2.300" fill="#111"/>
<path d="M8.300 1.500 V9.500 M4.300 5.500 H12.300 M5.500 2.700 L11.100 8.300 M11.100 2.700 L5.500 8.300" stroke="#111" stroke-width="1.300"/></svg>
<svg style="left:155px;top:629px" width="17" height="11" viewBox="0 0 17 11">
<circle cx="8.300" cy="5.500" r="2.300" fill="#8a8a8a"/>
<path d="M8.300 1.500 V9.500 M4.300 5.500 H12.300 M5.500 2.700 L11.100 8.300 M11.100 2.700 L5.500 8.300" stroke="#8a8a8a" stroke-width="1.300"/></svg>
<svg style="left:172px;top:629px" width="17" height="11" viewBox="0 0 17 11"><path d="M3.500 1 H13.500 L9.800 5.500 V10 H7.200 V5.500 Z" fill="#f07a10"/></svg>
<div class="a btn" style="left:545px;top:648px;width:21px;height:21px;"></div>
<div class="a btn" style="left:565px;top:648px;width:21px;height:21px;"></div>
<svg style="left:548px;top:651px" width="15" height="15" viewBox="0 0 15 15">
<defs><linearGradient id="gu" x1="0" y1="0" x2="0" y2="1"><stop offset="0" stop-color="#c4e6fa"/><stop offset="1" stop-color="#6aaee6"/></linearGradient></defs>
<path d="M7.500 1 L13.800 7.800 H10.300 V13.500 H4.700 V7.800 H1.200 Z" fill="url(#gu)" stroke="#5a8fd6" stroke-width="1" stroke-linejoin="round"/></svg>
<svg style="left:568px;top:651px" width="15" height="15" viewBox="0 0 15 15">
<path d="M7.500 14 L13.800 7.200 H10.300 V1.500 H4.700 V7.200 H1.200 Z" fill="url(#gu)" stroke="#5a8fd6" stroke-width="1" stroke-linejoin="round"/></svg>
<div class="a btn" style="left:590px;top:648px;width:65px;height:21px;"></div>
<svg style="left:594px;top:651px" width="16" height="15" viewBox="0 0 16 15">
<defs><linearGradient id="gf594" x1="0" y1="0" x2="0" y2="1"><stop offset="0" stop-color="#6eaae8"/><stop offset="1" stop-color="#3f80d2"/></linearGradient></defs>
<rect x="0.500" y="0.500" width="12" height="11" rx=".8" fill="#c9d2ee" stroke="#a2aedc"/>
<rect x="2.500" y="2.500" width="12.500" height="11.500" rx=".8" fill="url(#gf594)" stroke="#4d88d4"/>
</svg>
<span class="t" style="left:599.8px;top:654px;font-size:10px;line-height:12px;color:#fff;font-style:italic;font-family:"Liberation Serif",serif;will-change:transform;">f</span>
<span class="t" style="left:603.3px;top:657px;font-size:6px;line-height:8px;color:#fff;will-change:transform;">x</span>
<span class="t" style="left:613px;top:652px;transform:scaleX(0.96);transform-origin:left center;">Funkcje</span>
<div class="a btn" style="left:659px;top:648px;width:58px;height:21px;"></div>
<div class="a btn" style="left:716px;top:648px;width:15px;height:21px;"></div>
<svg style="left:663px;top:650px" width="14" height="17" viewBox="0 0 14 17">
<path d="M1.500 0.500 H8.500 L12.500 4.500 V15.500 H1.500 Z" fill="#f7f8fb" stroke="#d2d4dc" stroke-width="1"/>
<path d="M8.500 0.500 V4.500 H12.500" fill="#e6e6e6" stroke="#d2d4dc" stroke-width="1"/></svg>
<svg style="left:670px;top:657.5px" width="9" height="9" viewBox="0 0 9 9">
<circle cx="4.500" cy="4.500" r="4.200" fill="#3fb83f" stroke="#2a962a" stroke-width=".6"/>
<path d="M4.500 2 V7 M2 4.500 H7" stroke="#fff" stroke-width="1.500"/></svg>
<span class="t" style="left:680px;top:652px;letter-spacing:-0.17px;">Nowy</span>
<svg style="left:720px;top:657px" width="8" height="5" viewBox="0 0 8 5">
<path d="M0 0 H8 L4 4.500 Z" fill="#111"/></svg>
<div class="a btn" style="left:730px;top:648px;width:65px;height:21px;"></div>
<svg style="left:736px;top:650.5px" width="14" height="15" viewBox="0 0 14 15">
<path d="M1 1 H11 V14.500 H1 Z" fill="#fcfcfa" stroke="#d2d2d2" stroke-width="1"/>
<path d="M2 3 H7 M2 5 H6 M2 7 H5 M2 9 H4 M2 11 H4 M2 13 H9" stroke="#8c8c8c" stroke-width="1"/>
<path d="M4.800 10.800 L11 2.800 L12.800 4.200 L6.600 12.200 L4.300 13 Z" fill="#f2c23c" stroke="#c8901c" stroke-width=".6"/>
<path d="M11 2.800 L12 1.500 L13.800 2.900 L12.800 4.200 Z" fill="#e85a4a"/>
<path d="M4.800 10.800 L6.600 12.200 L4.300 13 Z" fill="#e8d4a0"/></svg>
<span class="t" style="left:750.5px;top:652px;letter-spacing:0.08px;">Edytuj</span>
<div class="a btn" style="left:794px;top:648px;width:58px;height:21px;"></div>
<div class="a btn" style="left:851px;top:648px;width:15px;height:21px;"></div>
<svg style="left:799px;top:650px" width="14" height="17" viewBox="0 0 14 17">
<path d="M1.500 0.500 H8.500 L12.500 4.500 V15.500 H1.500 Z" fill="#f7f8fb" stroke="#d2d4dc" stroke-width="1"/>
<path d="M8.500 0.500 V4.500 H12.500" fill="#e6e6e6" stroke="#d2d4dc" stroke-width="1"/></svg>
<svg style="left:805px;top:657.5px" width="9" height="9" viewBox="0 0 9 9">
<circle cx="4.500" cy="4.500" r="4.200" fill="#ee5a4c" stroke="#c8382c" stroke-width=".6"/>
<path d="M2 4.500 H7" stroke="#fff" stroke-width="1.600"/></svg>
<span class="t" style="left:814.5px;top:652px;transform:scaleX(0.934);transform-origin:left center;">Usuń</span>
<svg style="left:855px;top:657px" width="8" height="5" viewBox="0 0 8 5">
<path d="M0 0 H8 L4 4.500 Z" fill="#111"/></svg>
<div class="a btn" style="left:870px;top:648px;width:65px;height:21px;"></div>
<svg style="left:875px;top:650px" width="14" height="17" viewBox="0 0 14 17">
<path d="M1.500 0.500 H8.500 L12.500 4.500 V15.500 H1.500 Z" fill="#f7f8fb" stroke="#7f97c0" stroke-width="1"/>
<path d="M8.500 0.500 V4.500 H12.500" fill="#e6e6e6" stroke="#7f97c0" stroke-width="1"/></svg>
<svg style="left:879px;top:656px" width="11" height="11" viewBox="0 0 11 11">
<circle cx="4.200" cy="4.200" r="3.300" fill="#eaf3ff" stroke="#6a6a6a" stroke-width="1.200"/>
<path d="M6.800 6.800 L10 10" stroke="#d8901a" stroke-width="2"/></svg>
<span class="t" style="left:891px;top:652px;transform:scaleX(0.941);transform-origin:left center;">Podgląd</span>
<div class="a ib" style="left:4px;top:677px;width:21px;height:21px;"></div>
<svg style="left:7px;top:680px" width="15" height="16" viewBox="0 0 15 16">
<path d="M1.500 15 Q1.500 9.500 7.500 9.500 Q13.500 9.500 13.500 15 Z" fill="#3fa63f" stroke="#2a7a2a" stroke-width=".8"/>
<path d="M6.200 10 L7.500 13 L8.800 10 Z" fill="#f4f4f4"/>
<ellipse cx="7.500" cy="5.500" rx="3.200" ry="4" fill="#f2a848" stroke="#c07a1a" stroke-width=".8"/></svg>
<span class="t" style="left:30.5px;top:682px;letter-spacing:-0.04px;">Dokument wystawił :</span>
<span class="t" style="left:143.5px;top:682px;font-weight:bold;transform:scaleX(1.038);transform-origin:left center;">ADMIN ADMIN</span>
<span class="t" style="left:490.5px;top:681px;font-weight:bold;transform:scaleX(0.972);transform-origin:left center;">RAZEM</span>
<span class="t" style="left:554px;top:681px;transform:scaleX(1.063);transform-origin:left center;">netto</span>
<span class="t" style="left:682.5px;top:681px;transform:scaleX(0.818);transform-origin:left center;">VAT</span>
<span class="t" style="left:809.5px;top:681px;transform:scaleX(1.066);transform-origin:left center;">brutto</span>
<div class="a blk" style="left:588px;top:678px;width:87px;height:19px;"></div>
<span class="t" style="left:627.5px;top:681px;color:#fff;letter-spacing:-0.12px;">2 600,00</span>
<div class="a blk" style="left:716px;top:678px;width:87px;height:19px;"></div>
<span class="t" style="left:764px;top:681px;color:#fff;letter-spacing:-0.03px;">494,50</span>
<div class="a blk" style="left:843px;top:678px;width:87px;height:19px;"></div>
<span class="t" style="left:882px;top:681px;color:#fff;letter-spacing:-0.05px;">3 094,50</span>
<span class="t" style="left:490.5px;top:729px;font-weight:bold;transform:scaleX(0.94);transform-origin:left center;">ZAPŁACONO</span>
<div class="a blk" style="left:588px;top:726px;width:87px;height:19px;"></div>
<span class="t" style="left:648px;top:729px;color:#fff;letter-spacing:0.03px;">0,00</span>
<span class="t" style="left:683px;top:729px;transform:scaleX(0.872);transform-origin:left center;">[PLN]</span>
<span class="t" style="left:490.5px;top:753px;font-weight:bold;letter-spacing:-0.12px;">DO ROZLICZENIA</span>
<div class="a blk" style="left:588px;top:750px;width:87px;height:19px;"></div>
<span class="t" style="left:627px;top:753px;color:#fff;letter-spacing:-0.05px;">3 094,50</span>
<span class="t" style="left:683px;top:753px;transform:scaleX(0.872);transform-origin:left center;">[PLN]</span>
<div class="a btn dis" style="left:938px;top:35px;width:69px;height:25px;"></div>
<div class="a btn dis" style="left:1006px;top:35px;width:15px;height:25px;"></div>
<svg style="left:942px;top:39px" width="15" height="17" viewBox="0 0 15 17">
<path d="M1.500 1 H13.500 V12.500 L10 16 H1.500 Z" fill="#f5f5f5" stroke="#d6d6d6" stroke-width="1"/>
<path d="M10 16 V12.500 H13.500" fill="#ebebeb" stroke="#d6d6d6" stroke-width="1"/>
<circle cx="5" cy="5.500" r="1.700" fill="#c8c8c8"/>
<path d="M8 4.500 H12 M8 6.500 H12 M3.500 9.500 H11.500 M3.500 11.500 H9" stroke="#d2d2d2" stroke-width="1"/></svg>
<span class="t" style="left:961.1px;top:41px;color:#a3a3a3;letter-spacing:-0.01px;"><u>R</u>aport</span>
<svg style="left:1010px;top:46px" width="8" height="5" viewBox="0 0 8 5"><path d="M0 0 H8 L4 4.500 Z" fill="#9a9a9a"/></svg>
<div class="a btn" style="left:938px;top:67px;width:83px;height:25px;"></div>
<div class="a btn" style="left:938px;top:91px;width:83px;height:25px;"></div>
<svg style="left:943px;top:71px" width="14" height="16" viewBox="0 0 14 16">
<defs><linearGradient id="gd" x1="0" y1="0" x2="1" y2="1"><stop offset="0" stop-color="#e4e8f4"/><stop offset="1" stop-color="#f6f7fb"/></linearGradient></defs>
<path d="M0.500 0.500 H9.500 L13.500 4.500 V15.500 H0.500 Z" fill="url(#gd)" stroke="#d3d6e0" stroke-width="1"/>
<path d="M9.500 0.500 V4.500 H13.500 Z" fill="#dcdce4" stroke="#c4c6d0" stroke-width=".8"/></svg>
<svg style="left:949px;top:78px" width="9" height="9" viewBox="0 0 9 9">
<circle cx="4.500" cy="4.500" r="4.200" fill="#3fb83f" stroke="#2a962a" stroke-width=".6"/>
<path d="M4.500 2.200 V6.800 M2.200 4.500 H6.800" stroke="#fff" stroke-width="1.500"/></svg>
<span class="t" style="left:961.1px;top:73px;transform:scaleX(0.942);transform-origin:left center;"><u>N</u>owa</span>
<svg style="left:942px;top:95px" width="16" height="16" viewBox="0 0 16 16">
<path d="M0.500 0.500 H14 L15.500 2 V15.500 H0.500 Z" fill="#9195ea" stroke="#7479d6" stroke-width="1"/>
<rect x="4.500" y="0.800" width="7.500" height="4.700" fill="#e4e6f6" stroke="#8a8ed8" stroke-width=".5"/>
<rect x="8.800" y="1.500" width="1.800" height="3.200" fill="#5a60b0"/>
<rect x="2.800" y="7.500" width="10.400" height="7.500" fill="#f2f2f8" stroke="#8a8ed8" stroke-width=".5"/>
<path d="M4 9.500 H12 M4 11.500 H12 M4 13.500 H12" stroke="#c4c6e0" stroke-width="1"/></svg>
<span class="t" style="left:961.1px;top:97px;transform:scaleX(0.92);transform-origin:left center;"><u>Z</u>apisz</span>
<div class="a btn dis" style="left:938px;top:124px;width:83px;height:25px;"></div>
<div class="a btn dis" style="left:938px;top:148px;width:83px;height:25px;"></div>
<div class="a btn dis" style="left:938px;top:172px;width:83px;height:25px;"></div>
<span class="t" style="left:970.7px;top:130px;color:#a3a3a3;transform:scaleX(0.817);transform-origin:center center;">KP</span>
<span class="t" style="left:959.5px;top:154px;color:#a3a3a3;letter-spacing:-0.03px;">Zapłata</span>
<span class="t" style="left:952.7px;top:178px;color:#a3a3a3;transform:scaleX(0.957);transform-origin:center center;">Korespon.</span>
<div class="a btn dis" style="left:938px;top:202px;width:83px;height:25px;"></div>
<div class="a btn" style="left:938px;top:226px;width:83px;height:25px;"></div>
<svg style="left:943px;top:209px" width="14" height="11" viewBox="0 0 14 11">
<rect x="0.500" y="0.500" width="13" height="10" rx=".6" fill="#f3f3f3" stroke="#d9d9d9"/>
<path d="M1 1 L7 6 L13 1" fill="none" stroke="#dadada" stroke-width="1"/></svg>
<span class="t" style="left:961.1px;top:208px;color:#a3a3a3;transform:scaleX(0.854);transform-origin:left center;">Email</span>
<svg style="left:942px;top:230px" width="16" height="16" viewBox="0 0 16 16">
<defs><radialGradient id="gs" cx=".5" cy=".3" r=".8"><stop offset="0" stop-color="#6fe06a"/><stop offset="1" stop-color="#1f9a22"/></radialGradient></defs>
<path d="M7 12.300 L10.400 15.600 L11 12.300 Z" fill="#2aa02a"/>
<ellipse cx="8" cy="6.800" rx="7.800" ry="6.200" fill="url(#gs)" stroke="#2a8a2a" stroke-width=".5"/></svg>
<span class="t" style="left:943px;top:233px;font-size:8px;line-height:10px;font-weight:bold;color:#f01414;transform:scaleX(0.807);transform-origin:left center;">SMS</span>
<span class="t" style="left:961.1px;top:232px;transform:scaleX(0.818);transform-origin:left center;">SMS</span>
<div class="a btn" style="left:938px;top:257px;width:83px;height:25px;"></div>
<svg style="left:942px;top:261px" width="16" height="16" viewBox="0 0 16 16">
<rect x="0.500" y="0.500" width="9" height="8.500" fill="#f2f6fd" stroke="#9ab4e2"/>
<rect x="0.500" y="0.500" width="9" height="2.300" fill="#a9c3ea"/>
<path d="M0.500 5 H9.500 M0.500 7 H9.500 M3.500 2.800 V9 M6.500 2.800 V9" stroke="#b4c8ea" stroke-width=".8"/>
<rect x="6.500" y="7" width="9" height="8.500" fill="#f2f6fd" stroke="#9ab4e2"/>
<path d="M6.500 10 H15.500 M6.500 12.500 H15.500 M9.500 7 V15.500 M12.500 7 V15.500" stroke="#b4c8ea" stroke-width=".8"/>
<path d="M2.200 6.500 Q4 8.300 7 8.400 V6.300 L11.600 9.900 L7 13.500 V11.400 Q3.200 11.200 2.200 6.500 Z" fill="#79c232" stroke="#4f9a1c" stroke-width=".7" stroke-linejoin="round"/></svg>
<span class="t" style="left:961.1px;top:263px;transform:scaleX(0.965);transform-origin:left center;">Eksport</span>
<div class="a btn" style="left:938px;top:289px;width:83px;height:25px;"></div>
<svg style="left:943.5px;top:293.5px" width="14" height="14" viewBox="0 0 15 15">
<path d="M10.500 1 H12.300 V4.500 H10.500 Z" fill="#a83a2a"/>
<path d="M2.200 7 H12.800 V14.300 H2.200 Z" fill="#f4f6fc" stroke="#4f5a74" stroke-width="1"/>
<path d="M2.500 7.300 L7.500 2.600 L12.500 7.300 Z" fill="#f4f6fc"/>
<path d="M0.700 7.300 L7.500 1.200 L14.300 7.300" fill="none" stroke="#7a5a14" stroke-width="2.400" stroke-linejoin="round" stroke-linecap="round"/>
<path d="M0.700 7.300 L7.500 1.200 L14.300 7.300" fill="none" stroke="#e0a828" stroke-width="1.300" stroke-linejoin="round" stroke-linecap="round"/>
<rect x="6.300" y="9.500" width="2.700" height="4.600" fill="#eaa820" stroke="#b07a10" stroke-width=".5"/></svg>
<span class="t" style="left:961.1px;top:295px;transform:scaleX(0.95);transform-origin:left center;"><u>W</u>yjście</span>
<span class="t" style="left:465.5px;top:521px;font-size:12px;line-height:14px;color:#ff0000;letter-spacing:-0.04px;will-change:transform;">Usuwanie pozycji skopiowanych ze zlecenia</span>
<svg style="left:0;top:0" width="1024" height="770" viewBox="0 0 1024 770">
<path d="M492.300 545 L796 633" stroke="#ff0000" stroke-width="3" fill="none"/>
<path d="M816.500 638.900 L791.400 640.500 L796.200 625 Z" fill="#ff0000"/></svg>
</body>
</html>
